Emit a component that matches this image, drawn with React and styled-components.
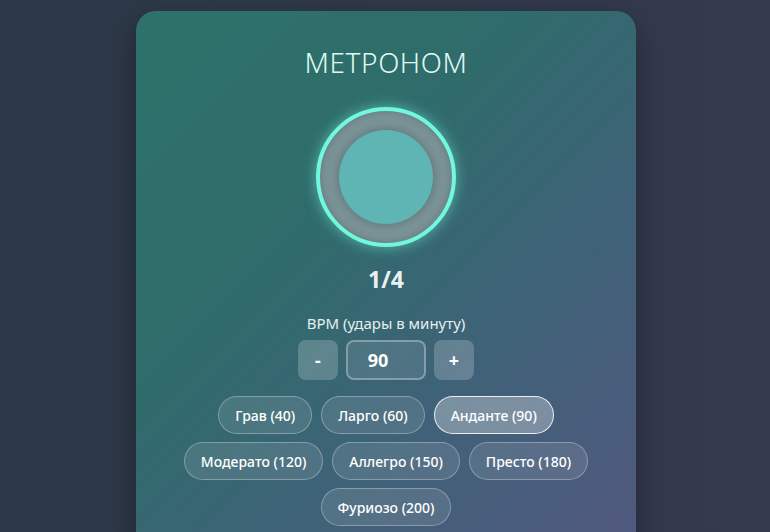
import React, { useState } from "react";
import styled, { createGlobalStyle } from "styled-components";

const Global = createGlobalStyle`
  html, body { margin: 0; padding: 0; height: 100%; }
  body {
    background: linear-gradient(90deg, #2c3847 0%, #313a4b 60%, #353a4e 100%);
    font-family: "Noto Sans", "Open Sans", sans-serif;
    overflow: hidden;
  }
`;

const Page = styled.div`
  display: flex;
  justify-content: center;
  padding-top: 11px;
  padding-left: 2px;
  height: 532px;
  box-sizing: border-box;
`;

const Card = styled.div`
  width: 500px;
  height: 560px;
  box-sizing: border-box;
  border-radius: 20px;
  background: linear-gradient(135deg, #2d726a 0%, #2f6c6b 35%, #3f6278 65%, #52577f 100%);
  box-shadow: 0 10px 30px rgba(0, 0, 0, 0.35);
  padding: 32px 20px 0;
  display: flex;
  flex-direction: column;
  align-items: center;
  color: #fff;
`;

const Title = styled.h1`
  margin: 0;
  font-size: 28px;
  font-weight: 300;
  letter-spacing: 0.6px;
  color: #dff8f2;
  line-height: 38px;
`;

const Beat = styled.div`
  margin-top: 26px;
  width: 140px;
  height: 140px;
  box-sizing: border-box;
  border-radius: 50%;
  border: 4px solid #72f7df;
  background: radial-gradient(circle, #7f9598 45%, #7a9498 70%, #5f8a8c 100%);
  box-shadow: 0 0 14px rgba(114, 247, 223, 0.55), inset 0 0 10px rgba(0, 0, 0, 0.2);
  display: flex;
  align-items: center;
  justify-content: center;
`;

const Inner = styled.div`
  width: 94px;
  height: 94px;
  border-radius: 50%;
  background: #5fb5b4;
  box-shadow: 0 0 12px rgba(40, 60, 70, 0.45);
`;

const Counter = styled.div`
  margin-top: 16px;
  font-size: 23px;
  font-weight: 700;
  color: #e9f2f1;
  line-height: 32px;
`;

const Label = styled.div`
  margin-top: 18px;
  font-size: 15px;
  color: #e6f0f0;
  line-height: 20px;
`;

const Controls = styled.div`
  margin-top: 7px;
  display: flex;
  gap: 8px;
`;

const StepButton = styled.button`
  width: 40px;
  height: 40px;
  border: none;
  border-radius: 8px;
  background: rgba(255, 255, 255, 0.2);
  color: #fff;
  font-family: inherit;
  font-size: 18px;
  font-weight: 700;
  cursor: pointer;
`;

const BpmInput = styled.input`
  width: 80px;
  height: 40px;
  box-sizing: border-box;
  padding: 0 16px 0 0;
  border: 2px solid rgba(255, 255, 255, 0.3);
  border-radius: 8px;
  background: rgba(255, 255, 255, 0.1);
  color: #fff;
  text-align: center;
  font-family: inherit;
  font-size: 18px;
  font-weight: 700;
  outline: none;
`;

const Presets = styled.div`
  margin-top: 16px;
  width: 460px;
  display: flex;
  flex-wrap: wrap;
  justify-content: center;
  gap: 8px 9px;
`;

const Preset = styled.button`
  height: 38px;
  padding: 0 16px;
  border-radius: 20px;
  border: 1px solid ${(p) => (p.$active ? "rgba(255,255,255,0.85)" : "rgba(255,255,255,0.3)")};
  background: ${(p) => (p.$active ? "rgba(255,255,255,0.3)" : "rgba(255,255,255,0.1)")};
  color: #fff;
  font-family: inherit;
  font-size: 14px;
  font-weight: 500;
  cursor: pointer;
`;

const presets = [
  ["Грав", 40],
  ["Ларго", 60],
  ["Анданте", 90],
  ["Модерато", 120],
  ["Аллегро", 150],
  ["Престо", 180],
  ["Фуриозо", 200],
];

export default function App() {
  const [bpm, setBpm] = useState(90);
  return (
    <>
      <Global />
      <Page>
        <Card>
          <Title>МЕТРОНОМ</Title>
          <Beat>
            <Inner />
          </Beat>
          <Counter>1/4</Counter>
          <Label>BPM (удары в минуту)</Label>
          <Controls>
            <StepButton onClick={() => setBpm((b) => b - 1)}>-</StepButton>
            <BpmInput value={bpm} onChange={(e) => setBpm(Number(e.target.value) || 0)} />
            <StepButton onClick={() => setBpm((b) => b + 1)}>+</StepButton>
          </Controls>
          <Presets>
            {presets.map(([name, v]) => (
              <Preset key={name} $active={v === bpm} onClick={() => setBpm(v)}>
                {name} ({v})
              </Preset>
            ))}
          </Presets>
        </Card>
      </Page>
    </>
  );
}
